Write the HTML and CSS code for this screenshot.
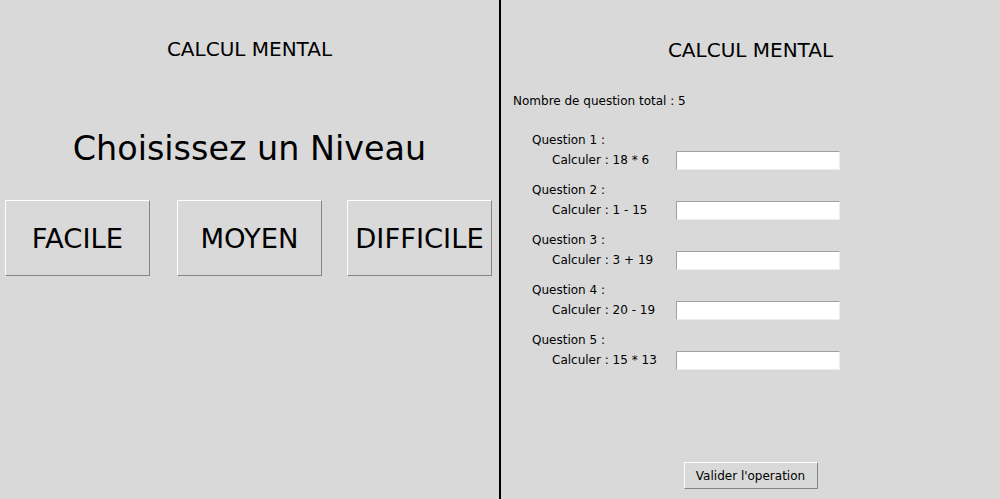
FILE: index.html
```html
<!DOCTYPE html>
<html lang="fr">
<head>
<meta charset="utf-8">
<title>Calcul mental</title>
<link rel="stylesheet" href="styles.css">
</head>
<body>
<div class="app">
  <section class="panel left">
    <h1 class="title">CALCUL MENTAL</h1>
    <h2 class="prompt">Choisissez un Niveau</h2>
    <div class="levels">
      <button class="level">FACILE</button>
      <button class="level level-mid">MOYEN</button>
      <button class="level level-hard">DIFFICILE</button>
    </div>
  </section>
  <div class="divider"></div>
  <section class="panel right">
    <h1 class="title">CALCUL MENTAL</h1>
    <p class="total">Nombre de question total : 5</p>
    <div class="questions">
      <div class="question">
        <div class="q-label">Question 1 :</div>
        <div class="q-row"><span class="q-calc">Calculer : 18 * 6</span><input class="q-input" type="text"></div>
      </div>
      <div class="question">
        <div class="q-label">Question 2 :</div>
        <div class="q-row"><span class="q-calc">Calculer : 1 - 15</span><input class="q-input" type="text"></div>
      </div>
      <div class="question">
        <div class="q-label">Question 3 :</div>
        <div class="q-row"><span class="q-calc">Calculer : 3 + 19</span><input class="q-input" type="text"></div>
      </div>
      <div class="question">
        <div class="q-label">Question 4 :</div>
        <div class="q-row"><span class="q-calc">Calculer : 20 - 19</span><input class="q-input" type="text"></div>
      </div>
      <div class="question">
        <div class="q-label">Question 5 :</div>
        <div class="q-row"><span class="q-calc">Calculer : 15 * 13</span><input class="q-input" type="text"></div>
      </div>
    </div>
    <div class="actions">
      <button class="validate">Valider l'operation</button>
    </div>
  </section>
</div>
</body>
</html>
```

FILE: styles.css
```css
* { box-sizing: border-box; }

html, body {
  margin: 0;
  padding: 0;
  background: #d9d9d9;
  font-family: "DejaVu Sans", sans-serif;
  color: #000;
}

.app {
  display: flex;
  width: 1000px;
  height: 499px;
  overflow: hidden;
}

.panel {
  display: flex;
  flex-direction: column;
}

.left { width: 499px; }
.right { width: 499px; }

.divider {
  width: 2px;
  background: #000;
}

.title {
  margin: 38px 0 0;
  font-size: 20px;
  line-height: 22px;
  font-weight: normal;
  text-align: center;
}

.right .title { margin-top: 39px; }

.prompt {
  margin: 70px 0 0;
  font-size: 33.4px;
  line-height: 38px;
  font-weight: normal;
  text-align: center;
}

.levels {
  display: flex;
  margin-top: 32px;
  padding-left: 5px;
}

.level {
  width: 145px;
  height: 76px;
  padding: 0;
  margin: 0;
  background: #d9d9d9;
  border: 1px solid;
  border-color: #ffffff #858585 #858585 #ffffff;
  font-family: "DejaVu Sans", sans-serif;
  font-size: 27.4px;
  color: #000;
}

.level-mid { margin-left: 27px; }
.level-hard { margin-left: 25px; }

.total {
  margin: 33px 0 0 12px;
  font-size: 12px;
  line-height: 14px;
}

.questions {
  margin: 25px 0 0 12px;
  display: flex;
  flex-direction: column;
  gap: 13px;
}

.question {
  display: flex;
  flex-direction: column;
}

.q-label {
  font-size: 12px;
  line-height: 14px;
  padding-left: 19px;
}

.q-row {
  display: flex;
  align-items: flex-start;
  margin-top: 4px;
  height: 19px;
  padding-left: 39px;
}

.q-calc {
  width: 124px;
  font-size: 12px;
  line-height: 14px;
  margin-top: 2px;
}

.q-input {
  width: 164px;
  height: 19px;
  margin: 0;
  padding: 0 2px;
  background: #fff;
  border: 1px solid;
  border-color: #a0a0a0 #ededed #ededed #a0a0a0;
  font-family: "DejaVu Sans", sans-serif;
  font-size: 12px;
  outline: none;
}

.actions {
  display: flex;
  justify-content: center;
  margin-top: 92px;
}

.validate {
  width: 134px;
  height: 27px;
  padding: 0;
  margin: 0;
  background: #d9d9d9;
  border: 1px solid;
  border-color: #ffffff #858585 #858585 #ffffff;
  font-family: "DejaVu Sans", sans-serif;
  font-size: 12px;
  color: #000;
}
```
